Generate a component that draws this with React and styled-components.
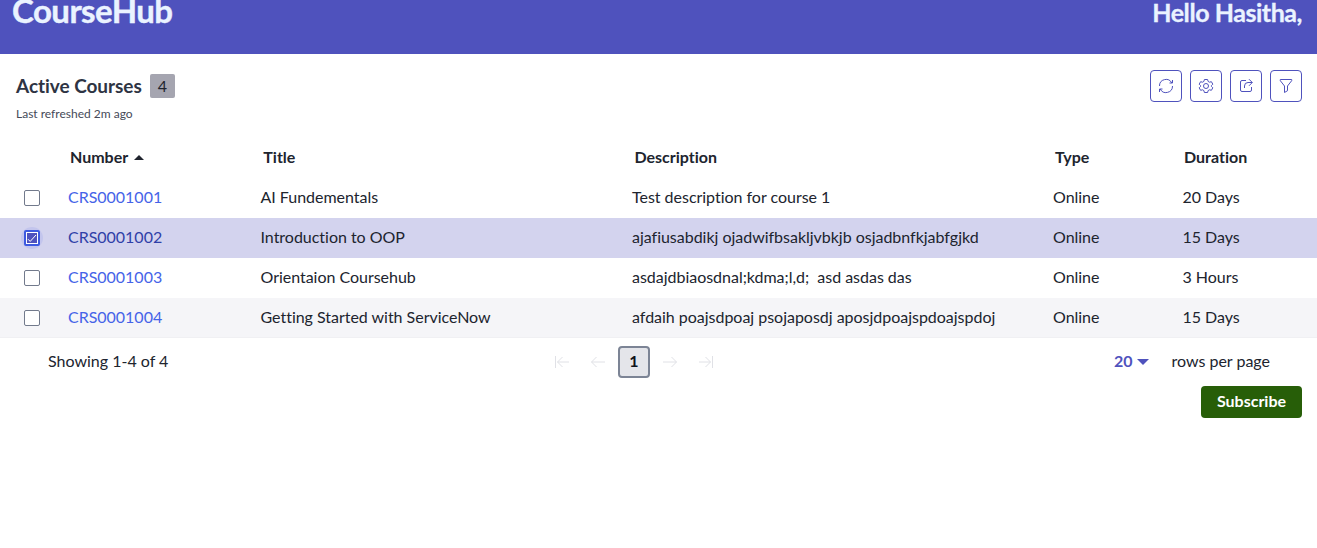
import React from "react";
import styled, { createGlobalStyle } from "styled-components";

const Global = createGlobalStyle`
  *, *::before, *::after { box-sizing: border-box; }
  body {
    margin: 0;
    background: #fff;
    color: #20242e;
    font: 16px/24px Lato, "Liberation Sans", sans-serif;
    font-variant-ligatures: none;
    overflow: hidden;
  }
  h1, h2, p { margin: 0; }
  button { font: inherit; padding: 0; margin: 0; cursor: pointer; }
`;

const Banner = styled.header`
  height: 54px;
  padding: 0 15px 0 12px;
  display: flex;
  align-items: flex-start;
  justify-content: space-between;
  background: #4f52bd;
  color: #eaf3ff;
`;

const Brand = styled.h1`
  font-size: 33px;
  line-height: 20px;
  font-weight: 700;
  letter-spacing: -0.55px;
  -webkit-text-stroke: 0.4px currentColor;
`;

const Greeting = styled.h2`
  font-size: 25px;
  line-height: 25px;
  font-weight: 700;
  letter-spacing: -0.45px;
  -webkit-text-stroke: 0.3px currentColor;
`;

const Toolbar = styled.section`
  height: 84px;
  padding: 16px 15px 0 16px;
  display: flex;
  justify-content: space-between;
`;

const TitleRow = styled.div`
  height: 32px;
  display: flex;
  align-items: center;
`;

const ListTitle = styled.h2`
  width: 134px;
  font-size: 19px;
  line-height: 24px;
  font-weight: 700;
  letter-spacing: -0.05px;
  color: #2e3443;
  white-space: nowrap;
`;

const Count = styled.span`
  width: 25px;
  height: 24px;
  border-radius: 2px;
  background: #a5a5b0;
  color: #20242e;
  text-align: center;
`;

const Refreshed = styled.p`
  margin-top: 3px;
  font-size: 12px;
  line-height: 18px;
  color: #454a58;
`;

const Actions = styled.div`
  display: flex;
  gap: 8px;
`;

const IconButton = styled.button`
  width: 32px;
  height: 32px;
  display: grid;
  place-items: center;
  border: 1px solid #4f52bd;
  border-radius: 4px;
  background: #fff;
  color: #4f52bd;
`;

const Icon = styled.svg`
  width: 16px;
  height: 16px;
  display: block;
  fill: none;
  stroke: currentColor;
  stroke-width: 1;
`;

const Row = styled.div`
  height: 40px;
  display: grid;
  grid-template-columns: 44px 192.5px 371.5px 421px 129.5px 1fr;
  align-items: center;
  padding-left: 24px;
  letter-spacing: -0.02px;
  background: ${(p) => (p.$selected ? "#d3d3ee" : p.$striped ? "#f5f5f8" : "#fff")};
`;

const HeadRow = styled(Row)`
  grid-template-columns: 46px 193.3px 371.2px 420.5px 129px 1fr;
  font-weight: 700;
  letter-spacing: 0;
`;

const Cell = styled.span`
  display: flex;
  align-items: center;
  padding-bottom: 2px;
  white-space: pre;
`;

const SortMark = styled.span`
  margin: 1px 0 0 5.5px;
  border: 4.5px solid transparent;
  border-width: 0 5px 5px;
  border-bottom-color: #20242e;
`;

const Link = styled(Cell)`
  color: ${(p) => (p.$selected ? "#2f40a8" : "#4563e8")};
`;

const Halo = styled.span`
  width: 22px;
  height: 22px;
  margin-left: -3px;
  display: grid;
  place-items: center;
  border-radius: 50%;
  background: ${(p) => (p.$checked ? "#c3c5ed" : "transparent")};
`;

const Box = styled.span`
  width: 16px;
  height: 16px;
  display: grid;
  place-items: center;
  border-radius: 2px;
  border: ${(p) => (p.$checked ? "2px solid #3d5ae0" : "1px solid #727a8c")};
  background: ${(p) => (p.$checked ? "#4f52bd" : "#fff")};
  box-shadow: ${(p) => (p.$checked ? "inset 0 0 0 1px #fff" : "none")};
  color: #fff;
`;

const Tick = styled.svg`
  width: 10px;
  height: 10px;
  fill: none;
  stroke: currentColor;
`;

const Footer = styled.footer`
  height: 48px;
  display: grid;
  grid-template-columns: 506px 160px 1fr;
  align-items: center;
  padding: 0 47px 0 48px;
  box-shadow: 0 -1px 0 #f0f0f3;
`;

const Label = styled.span`
  padding-bottom: 2px;
`;

const Pager = styled.nav`
  display: grid;
  grid-template-columns: 36px 28px 44px 36px 16px;
  align-items: center;
  color: #e0e1e6;
`;

const Page = styled.span`
  width: 32px;
  height: 32px;
  line-height: 26px;
  border: 2px solid #7c8495;
  border-radius: 4px;
  background: #e4e5ea;
  color: #10131c;
  font-weight: 700;
  text-align: center;
`;

const PageSize = styled.div`
  display: flex;
  align-items: center;
  justify-content: flex-end;
`;

const SizeValue = styled(Label)`
  color: #4f52bd;
  font-weight: 700;
`;

const DownMark = styled.span`
  margin: 0 22px 0 5px;
  border: 0 solid transparent;
  border-width: 6px 6px 0;
  border-top-color: #4f52bd;
`;

const SubmitRow = styled.div`
  display: flex;
  justify-content: flex-end;
  padding-right: 15px;
`;

const Subscribe = styled.button`
  width: 101px;
  height: 32px;
  padding-bottom: 2px;
  border: 0;
  border-radius: 4px;
  background: #275e08;
  color: #fff;
  font-weight: 700;
`;

const courses = [
  ["CRS0001001", "AI Fundementals", "Test description for course 1", "Online", "20 Days"],
  ["CRS0001002", "Introduction to OOP", "ajafiusabdikj ojadwifbsakljvbkjb osjadbnfkjabfgjkd", "Online", "15 Days"],
  ["CRS0001003", "Orientaion Coursehub", "asdajdbiaosdnal;kdma;l,d;  asd asdas das", "Online", "3 Hours"],
  ["CRS0001004", "Getting Started with ServiceNow", "afdaih poajsdpoaj psojaposdj aposjdpoajspdoajspdoj", "Online", "15 Days"],
];

const icons = {
  refresh: "M1.5 8A6.5 6.5 0 0 1 13.8 5M14.5 2V5H11.5M14.5 8A6.5 6.5 0 0 1 2.2 11M1.5 14V11H4.5",
  gear: "M6.4 1.5h3.2l.5 1.9 1.3.8 2-.5 1.4 2.5-1.4 1.4v.8l1.4 1.4-1.4 2.5-2-.5-1.3.8-.5 1.9H6.4l-.5-1.9-1.3-.8-2 .5-1.4-2.5 1.4-1.4v-.8L1.2 6.2l1.4-2.5 2 .5 1.3-.8ZM8 5.5a2.5 2.5 0 1 1 0 5a2.5 2.5 0 0 1 0-5",
  share: "M8 2.5h-4a1.5 1.5 0 0 0-1.5 1.5v8a1.5 1.5 0 0 0 1.5 1.5h8a1.5 1.5 0 0 0 1.5-1.5V9M6.5 10V8a3.5 3.5 0 0 1 3.5-3.5h4.2M11 1.2 14.3 4.5 11 7.8",
  filter: "M2.3 1.5h11.4v1.2L9.5 8v4.7l-3 1.8V8L2.3 2.7Z",
  first: "M1.5 2v12M15 8H3.5M8.5 3 3.5 8l5 5",
  prev: "M15 8H1.5M6.5 3l-5 5 5 5",
  next: "M1 8h13.5M9.5 3l5 5-5 5",
  last: "M14.5 2v12M1 8h11.5M7.5 3l5 5-5 5",
};

const Glyph = ({ name }) => (
  <Icon viewBox="0 0 16 16">
    <path d={icons[name]} />
  </Icon>
);

export default function App() {
  return (
    <>
      <Global />
      <Banner>
        <Brand>CourseHub</Brand>
        <Greeting>Hello Hasitha,</Greeting>
      </Banner>
      <Toolbar>
        <div>
          <TitleRow>
            <ListTitle>Active Courses</ListTitle>
            <Count>4</Count>
          </TitleRow>
          <Refreshed>Last refreshed 2m ago</Refreshed>
        </div>
        <Actions>
          {["refresh", "gear", "share", "filter"].map((n) => (
            <IconButton key={n} aria-label={n}>
              <Glyph name={n} />
            </IconButton>
          ))}
        </Actions>
      </Toolbar>
      <HeadRow>
        <Cell />
        <Cell>Number<SortMark /></Cell>
        <Cell>Title</Cell>
        <Cell>Description</Cell>
        <Cell>Type</Cell>
        <Cell>Duration</Cell>
      </HeadRow>
      {courses.map(([number, title, description, type, duration], i) => (
        <Row key={number} $selected={i === 1} $striped={i % 2 === 1}>
          <Halo $checked={i === 1}>
            <Box $checked={i === 1}>
              {i === 1 && (
                <Tick viewBox="0 0 10 10">
                  <path d="M1 6.2 3.2 8.4 9 2" />
                </Tick>
              )}
            </Box>
          </Halo>
          <Link $selected={i === 1}>{number}</Link>
          <Cell>{title}</Cell>
          <Cell>{description}</Cell>
          <Cell>{type}</Cell>
          <Cell>{duration}</Cell>
        </Row>
      ))}
      <Footer>
        <Label>Showing 1-4 of 4</Label>
        <Pager>
          <Glyph name="first" />
          <Glyph name="prev" />
          <Page>1</Page>
          <Glyph name="next" />
          <Glyph name="last" />
        </Pager>
        <PageSize>
          <SizeValue>20</SizeValue>
          <DownMark />
          <Label>rows per page</Label>
        </PageSize>
      </Footer>
      <SubmitRow>
        <Subscribe>Subscribe</Subscribe>
      </SubmitRow>
    </>
  );
}
